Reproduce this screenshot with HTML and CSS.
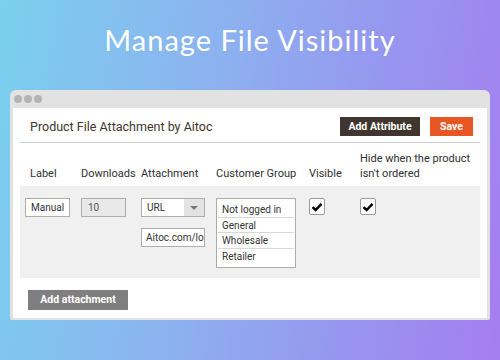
FILE: index.html
```html
<!DOCTYPE html>
<html lang="en">
<head>
    <meta charset="UTF-8">
    <title>Manage File Visibility</title>
    <link rel="stylesheet" href="styles.css">
</head>
<body>
    <div class="hero">
        <h1>Manage File Visibility</h1>
    </div>

    <div class="window">
        <div class="titlebar">
            <span class="dot"></span>
            <span class="dot"></span>
            <span class="dot"></span>
        </div>

        <div class="content">
            <div class="head">
                <div class="head-title">Product File Attachment by Aitoc</div>
                <div class="actions">
                    <button class="btn btn-dark">Add Attribute</button>
                    <button class="btn btn-orange">Save</button>
                </div>
            </div>

            <div class="grid cols">
                <div class="col-label">Label</div>
                <div>Downloads</div>
                <div>Attachment</div>
                <div>Customer Group</div>
                <div>Visible</div>
                <div>Hide when the product isn't ordered</div>
            </div>

            <div class="grid row">
                <div><div class="field w-label">Manual</div></div>
                <div><div class="field field-disabled w-dl">10</div></div>
                <div class="stack">
                    <div class="select">
                        <span class="select-value">URL</span>
                        <span class="select-arrow"></span>
                    </div>
                    <div class="field w-url">Aitoc.com/lo</div>
                </div>
                <div>
                    <ul class="listbox">
                        <li>Not logged in</li>
                        <li>General</li>
                        <li>Wholesale</li>
                        <li>Retailer</li>
                    </ul>
                </div>
                <div>
                    <span class="check">
                        <svg width="12" height="10" viewBox="0 0 12 10"><path d="M1.5 5.2 L4.6 8 L10.5 1.8" fill="none" stroke="#000" stroke-width="2.4"/></svg>
                    </span>
                </div>
                <div>
                    <span class="check">
                        <svg width="12" height="10" viewBox="0 0 12 10"><path d="M1.5 5.2 L4.6 8 L10.5 1.8" fill="none" stroke="#000" stroke-width="2.4"/></svg>
                    </span>
                </div>
            </div>

            <div class="footer">
                <button class="btn btn-grey">Add attachment</button>
            </div>
        </div>
    </div>
</body>
</html>
```

FILE: styles.css
```css
* {
    margin: 0;
    padding: 0;
    box-sizing: border-box;
}

body {
    width: 500px;
    height: 360px;
    overflow: hidden;
    font-family: Roboto, Arial, sans-serif;
    background: linear-gradient(100deg, #7ad0ee 0%, #8cb2ef 40%, #9697ef 70%, #a57df0 100%);
}

.hero {
    height: 90px;
    padding-top: 22px;
    text-align: center;
}

.hero h1 {
    font-family: Lato, "Open Sans", sans-serif;
    font-weight: 400;
    font-size: 29px;
    line-height: 36px;
    letter-spacing: 1px;
    color: #fff;
}

.window {
    margin: 0 10px;
    height: 230px;
    background: #e2e2e2;
    border-radius: 6px 6px 2px 2px;
    padding: 0 3px 2px;
    display: flex;
    flex-direction: column;
}

.titlebar {
    height: 18px;
    display: flex;
    align-items: center;
    gap: 2px;
    padding-left: 1px;
}

.dot {
    width: 8px;
    height: 8px;
    border-radius: 50%;
    background: #b4b4b4;
}

.content {
    flex: 1;
    background: #fff;
    padding: 0 7px;
}

.head {
    height: 35px;
    display: flex;
    align-items: center;
    justify-content: space-between;
    border-bottom: 1px solid #d0d0d0;
    padding: 2px 7px 0 10px;
}

.head-title {
    font-size: 12.5px;
    color: #41362f;
}

.actions {
    display: flex;
    gap: 10px;
}

.btn {
    border: none;
    font-family: Roboto, Arial, sans-serif;
    font-weight: 700;
    font-size: 10.5px;
    color: #fff;
    height: 19px;
    cursor: pointer;
}

.btn-dark {
    background: #41362f;
    width: 80px;
}

.btn-orange {
    background: #e95625;
    width: 43px;
}

.btn-grey {
    background: #7f7f7f;
    width: 100px;
    height: 20px;
}

.grid {
    display: grid;
    grid-template-columns: 56px 60px 75px 93px 51px 1fr;
    padding-left: 5px;
}

.cols {
    height: 43px;
    align-items: end;
    font-size: 11px;
    line-height: 15px;
    color: #303030;
    padding-bottom: 5px;
}

.col-label {
    padding-left: 5px;
}

.row {
    background: #f0f0f0;
    height: 92px;
    padding-top: 12px;
    align-items: start;
    font-size: 10px;
    color: #333;
}

.field {
    height: 19px;
    line-height: 17px;
    border: 1px solid #adadad;
    background: #fff;
    padding-left: 5px;
    white-space: nowrap;
    overflow: hidden;
}

.field-disabled {
    background: #e9e9e9;
    color: #555;
    padding-left: 6px;
}

.w-label { width: 45px; }
.w-dl { width: 45px; }
.w-url { width: 64px; padding-left: 4px; }

.stack {
    display: flex;
    flex-direction: column;
    gap: 11px;
}

.select {
    width: 64px;
    height: 19px;
    border: 1px solid #adadad;
    background: #fff;
    display: flex;
}

.select-value {
    flex: 1;
    line-height: 17px;
    padding-left: 5px;
}

.select-arrow {
    width: 20px;
    background: #e3e3e3;
    position: relative;
}

.select-arrow::after {
    content: "";
    position: absolute;
    left: 6px;
    top: 7px;
    border-left: 4px solid transparent;
    border-right: 4px solid transparent;
    border-top: 4px solid #777;
}

.listbox {
    list-style: none;
    width: 80px;
    border: 1px solid #adadad;
    background: #fff;
    padding: 3px 1px 3px 1px;
}

.listbox li {
    height: 15.5px;
    line-height: 15px;
    padding-left: 4px;
    border-bottom: 1px solid #d8d8d8;
    white-space: nowrap;
}

.listbox li:last-child {
    border-bottom: none;
}

.check {
    width: 16px;
    height: 17px;
    border: 1px solid #9a9a9a;
    border-radius: 2px;
    background: #fff;
    display: flex;
    align-items: center;
    justify-content: center;
}

.footer {
    padding: 10px 0 0 8px;
}
```
